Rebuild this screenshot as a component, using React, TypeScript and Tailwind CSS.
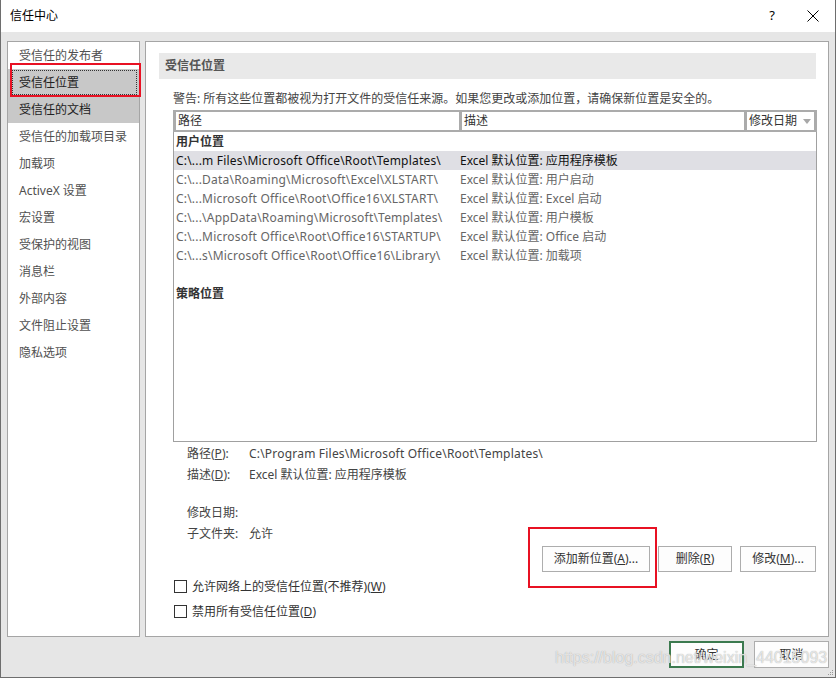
import React from "react";

const F = "font-['Noto_Sans','Noto_Sans_CJK_SC',sans-serif]";

const navItems = [
  "受信任的发布者",
  "受信任位置",
  "受信任的文档",
  "受信任的加载项目录",
  "加载项",
  "ActiveX 设置",
  "宏设置",
  "受保护的视图",
  "消息栏",
  "外部内容",
  "文件阻止设置",
  "隐私选项",
];

const rows = [
  ["C:\\...m Files\\Microsoft Office\\Root\\Templates\\", "Excel 默认位置: 应用程序模板"],
  ["C:\\...Data\\Roaming\\Microsoft\\Excel\\XLSTART\\", "Excel 默认位置: 用户启动"],
  ["C:\\...Microsoft Office\\Root\\Office16\\XLSTART\\", "Excel 默认位置: Excel 启动"],
  ["C:\\...\\AppData\\Roaming\\Microsoft\\Templates\\", "Excel 默认位置: 用户模板"],
  ["C:\\...Microsoft Office\\Root\\Office16\\STARTUP\\", "Excel 默认位置: Office 启动"],
  ["C:\\...s\\Microsoft Office\\Root\\Office16\\Library\\", "Excel 默认位置: 加载项"],
];

function Btn({ children, w, className = "" }: { children: React.ReactNode; w: string; className?: string }) {
  return (
    <div
      className={`${w} h-[26px] flex items-center justify-center bg-[#fdfdfd] border border-[#adadad] text-[12px] text-[#333] ${className}`}
    >
      {children}
    </div>
  );
}

export default function App() {
  return (
    <div className={`${F} w-[836px] h-[678px] bg-[#e6e6e6] border-l border-r border-b border-[#6e6e6e] flex flex-col relative overflow-hidden`}>
      {/* title bar */}
      <div className="h-[32px] bg-white flex items-center shrink-0">
        <div className="pl-[9px] text-[12px] text-[#000] flex-1">信任中心</div>
        <div className="w-[20px] text-[13px] text-[#000] text-center mr-[25px]">?</div>
        <div className="w-[12px] h-[12px] mr-[16px] relative">
          <svg width="12" height="12" viewBox="0 0 12 12">
            <path d="M0.5 0.5 L11.5 11.5 M11.5 0.5 L0.5 11.5" stroke="#000" strokeWidth="1" fill="none" />
          </svg>
        </div>
      </div>

      {/* body */}
      <div className="flex pl-[6px] pr-[6px] pt-[9px] gap-[5px] h-[605px] shrink-0">
        {/* nav */}
        <div className="w-[133px] h-[596px] bg-white border border-[#a5a5a5] flex flex-col">
          {navItems.map((t, i) => (
            <div
              key={t}
              className={`h-[27px] shrink-0 flex items-center pl-[11px] text-[12px] relative ${
                i === 1 || i === 2 ? "bg-[#c8c8c8] text-[#222]" : "text-[#505050]"
              }`}
            >
              {i === 1 && (
                <div className="absolute left-[4px] right-[2px] top-[1px] bottom-[1px] border border-dotted border-[#333]" />
              )}
              <span className="relative">{t}</span>
            </div>
          ))}
        </div>

        {/* right panel */}
        <div className="w-[684px] h-[596px] bg-white border border-[#a5a5a5] flex flex-col pl-[13px] pr-[12px] pt-[11px]">
          <div className="h-[26px] bg-[#e9e9e9] flex items-center pl-[6px] text-[12px] font-bold text-[#555] shrink-0">
            受信任位置
          </div>
          <div className="pl-[14px] flex flex-col">
            <div className="h-[31px] flex items-end pb-[5px] text-[12px] text-[#444] leading-none">
              警告: 所有这些位置都被视为打开文件的受信任来源。如果您更改或添加位置，请确保新位置是安全的。
            </div>
            {/* table */}
            <div className="w-[644px] flex flex-col">
              <div className="h-[22px] bg-[#ababab] px-[3px] py-[2px] flex gap-[3px]">
                <div className="w-[283px] bg-white text-[12px] text-[#333] pl-[2px] flex items-center">路径</div>
                <div className="w-[282px] bg-white text-[12px] text-[#333] pl-[2px] flex items-center">描述</div>
                <div className="flex-1 bg-white text-[12px] text-[#333] pl-[2px] flex items-center justify-between pr-[3px]">
                  <span>修改日期</span>
                  <svg width="8" height="5" viewBox="0 0 8 5">
                    <path d="M0 0 L8 0 L4 5 Z" fill="#a8a8a8" />
                  </svg>
                </div>
              </div>
              <div className="h-[310px] border-l border-r border-b border-[#a0a0a0] flex flex-col">
                <div className="h-[19px] flex items-center pl-[2px] text-[12px] font-bold text-[#333]">用户位置</div>
                {rows.map((r, i) => (
                  <div
                    key={i}
                    className={`h-[19px] flex items-center text-[12px] ${
                      i === 0 ? "bg-[#dfdfe4] text-[#111]" : "text-[#666]"
                    }`}
                  >
                    <div className="w-[286px] pl-[2px] whitespace-nowrap overflow-hidden tracking-[0.2px]">{r[0]}</div>
                    <div className="whitespace-nowrap">{r[1]}</div>
                  </div>
                ))}
                <div className="h-[19px]" />
                <div className="h-[19px] flex items-center pl-[2px] text-[12px] font-bold text-[#333]">策略位置</div>
              </div>
            </div>

            {/* details */}
            <div className="pl-[14px] flex flex-col text-[12px] text-[#444] pt-[1px]">
              <div className="h-[21px] flex items-center">
                <span className="w-[62px]">路径(<span className="underline">P</span>):</span>
                <span className="tracking-[0.2px]">C:\Program Files\Microsoft Office\Root\Templates\</span>
              </div>
              <div className="h-[21px] flex items-center">
                <span className="w-[62px]">描述(<span className="underline">D</span>):</span>
                <span>Excel 默认位置: 应用程序模板</span>
              </div>
              <div className="h-[17px]" />
              <div className="h-[21px] flex items-center">
                <span>修改日期:</span>
              </div>
              <div className="h-[21px] flex items-center">
                <span className="w-[62px]">子文件夹:</span>
                <span>允许</span>
              </div>
            </div>

            {/* buttons */}
            <div className="flex justify-end gap-[8px] mt-[2px] relative">
              <Btn w="w-[108px]">添加新位置(<span className="underline">A</span>)...</Btn>
              <Btn w="w-[74px]">删除(<span className="underline">R</span>)</Btn>
              <Btn w="w-[76px]">修改(<span className="underline">M</span>)...</Btn>
              <div className="absolute left-[355px] top-[-19px] w-[129px] h-[61px] border-2 border-[#e81123]" />
            </div>

            {/* checkboxes */}
            <div className="flex flex-col mt-[2px] text-[12px] text-[#333]">
              <div className="h-[25px] flex items-center gap-[5px] pl-[1px]">
                <div className="w-[13px] h-[13px] border border-[#333] bg-white" />
                <span>允许网络上的受信任位置(不推荐)(<span className="underline">W</span>)</span>
              </div>
              <div className="h-[25px] flex items-center gap-[5px] pl-[1px]">
                <div className="w-[13px] h-[13px] border border-[#333] bg-white" />
                <span>禁用所有受信任位置(<span className="underline">D</span>)</span>
              </div>
            </div>
          </div>
        </div>
      </div>

      {/* footer */}
      <div className="flex justify-end gap-[10px] pr-[6px] pt-[4px]">
        <div className="w-[75px] h-[27px] flex items-center justify-center bg-[#fdfdfd] border-2 border-[#3c7a4f] text-[12px] text-[#333]">
          确定
        </div>
        <div className="w-[75px] h-[27px] flex items-center justify-center bg-[#fdfdfd] border border-[#adadad] text-[12px] text-[#333]">
          取消
        </div>
      </div>

      {/* red box on nav */}
      <div className="absolute left-[9px] top-[63px] w-[131px] h-[34px] border-2 border-[#e81123]" />

      {/* watermark */}
      <div className="absolute left-[554px] top-[646px] text-[16px] font-['Liberation_Sans',sans-serif] text-[#ffffff]/70 [text-shadow:0_0_1px_#9a9a9a] whitespace-nowrap pointer-events-none">
        https://blog.csdn.net/weixin_44015093
      </div>

      {/* resize grip */}
      <svg className="absolute right-[1px] bottom-[1px]" width="8" height="8" viewBox="0 0 8 8">
        <rect x="6" y="2" width="1" height="1" fill="#999" />
        <rect x="4" y="4" width="1" height="1" fill="#999" />
        <rect x="6" y="4" width="1" height="1" fill="#999" />
        <rect x="2" y="6" width="1" height="1" fill="#999" />
        <rect x="4" y="6" width="1" height="1" fill="#999" />
        <rect x="6" y="6" width="1" height="1" fill="#999" />
      </svg>
    </div>
  );
}
